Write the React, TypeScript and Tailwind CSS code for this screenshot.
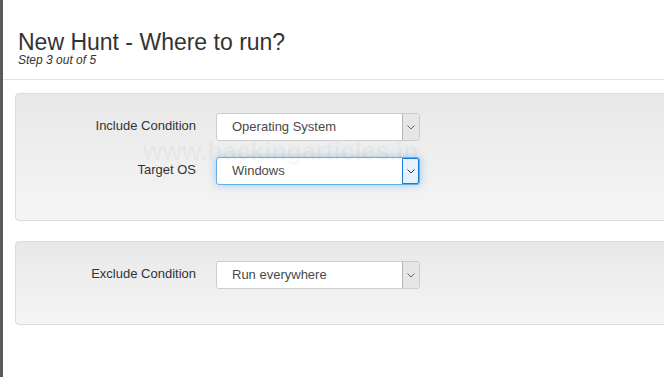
import React from 'react';

function Chevron({ color }: { color: string }) {
  return (
    <svg width="8" height="5" viewBox="0 0 8 5" fill="none">
      <polyline points="0.5,0.5 4,4 7.5,0.5" stroke={color} strokeWidth="1" />
    </svg>
  );
}

function FakeSelect({ value, focused = false }: { value: string; focused?: boolean }) {
  return (
    <div
      className={
        focused
          ? 'flex w-[204px] h-[28px] rounded-[3px] border border-[#66afe9] bg-white shadow-[0_0_8px_rgba(102,175,233,0.6)]'
          : 'flex w-[204px] h-[28px] rounded-[3px] border border-[#cccccc] bg-white'
      }
    >
      <div className="flex-1 flex items-center pl-[15px] text-[13px] text-[#4a4a4a]">{value}</div>
      <div
        className={
          focused
            ? 'w-[17px] flex items-center justify-center bg-[#e5f1fb] border border-[#1a78d6] rounded-r-[2px]'
            : 'w-[17px] flex items-center justify-center bg-[#e6e6e6] border-l border-[#b4b4b4] rounded-r-[2px]'
        }
      >
        <Chevron color={focused ? '#333' : '#666'} />
      </div>
    </div>
  );
}

function Row({ label, children }: { label: string; children: React.ReactNode }) {
  return (
    <div className="flex items-center">
      <label className="w-[180px] text-right text-[13px] text-[#333] pb-[2px]">{label}</label>
      <div className="ml-[20px]">{children}</div>
    </div>
  );
}

export default function App() {
  return (
    <div
      className="relative w-[664px] h-[377px] overflow-hidden bg-white flex"
      style={{ fontFamily: '"Liberation Sans", Arial, sans-serif' }}
    >
      <div className="w-[3px] shrink-0 bg-[#5a5a5a]" />

      <div className="shrink-0 w-[720px]">
        {/* ── Header ───────────────────────────── */}
        <div className="pt-[31px] pb-[13px] pl-[15px] border-b border-[#e5e5e5]">
          <h1 className="text-[23px] leading-[23px] text-[#333]">New Hunt - Where to run?</h1>
          <p className="text-[12px] leading-[12px] italic text-[#333]">Step 3 out of 5</p>
        </div>

        {/* ── Conditions ───────────────────────── */}
        <div className="pt-[13px] pl-[12px] flex flex-col gap-[20px]">
          <div className="rounded-[4px] border border-[#dcdcdc] bg-gradient-to-b from-[#e8e8e8] to-[#f5f5f5] pt-[19px] pb-[35px] flex flex-col gap-[16px]">
            <Row label="Include Condition">
              <FakeSelect value="Operating System" />
            </Row>
            <Row label="Target OS">
              <FakeSelect value="Windows" focused />
            </Row>
          </div>

          <div className="rounded-[4px] border border-[#dcdcdc] bg-gradient-to-b from-[#e8e8e8] to-[#f5f5f5] pt-[19px] pb-[35px]">
            <Row label="Exclude Condition">
              <FakeSelect value="Run everywhere" />
            </Row>
          </div>
        </div>
      </div>

      {/* watermark */}
      <div className="absolute left-[143px] top-[133px] pointer-events-none text-[25px] font-bold text-[rgba(120,120,120,0.06)]">
        www.hackingarticles.in
      </div>
    </div>
  );
}
